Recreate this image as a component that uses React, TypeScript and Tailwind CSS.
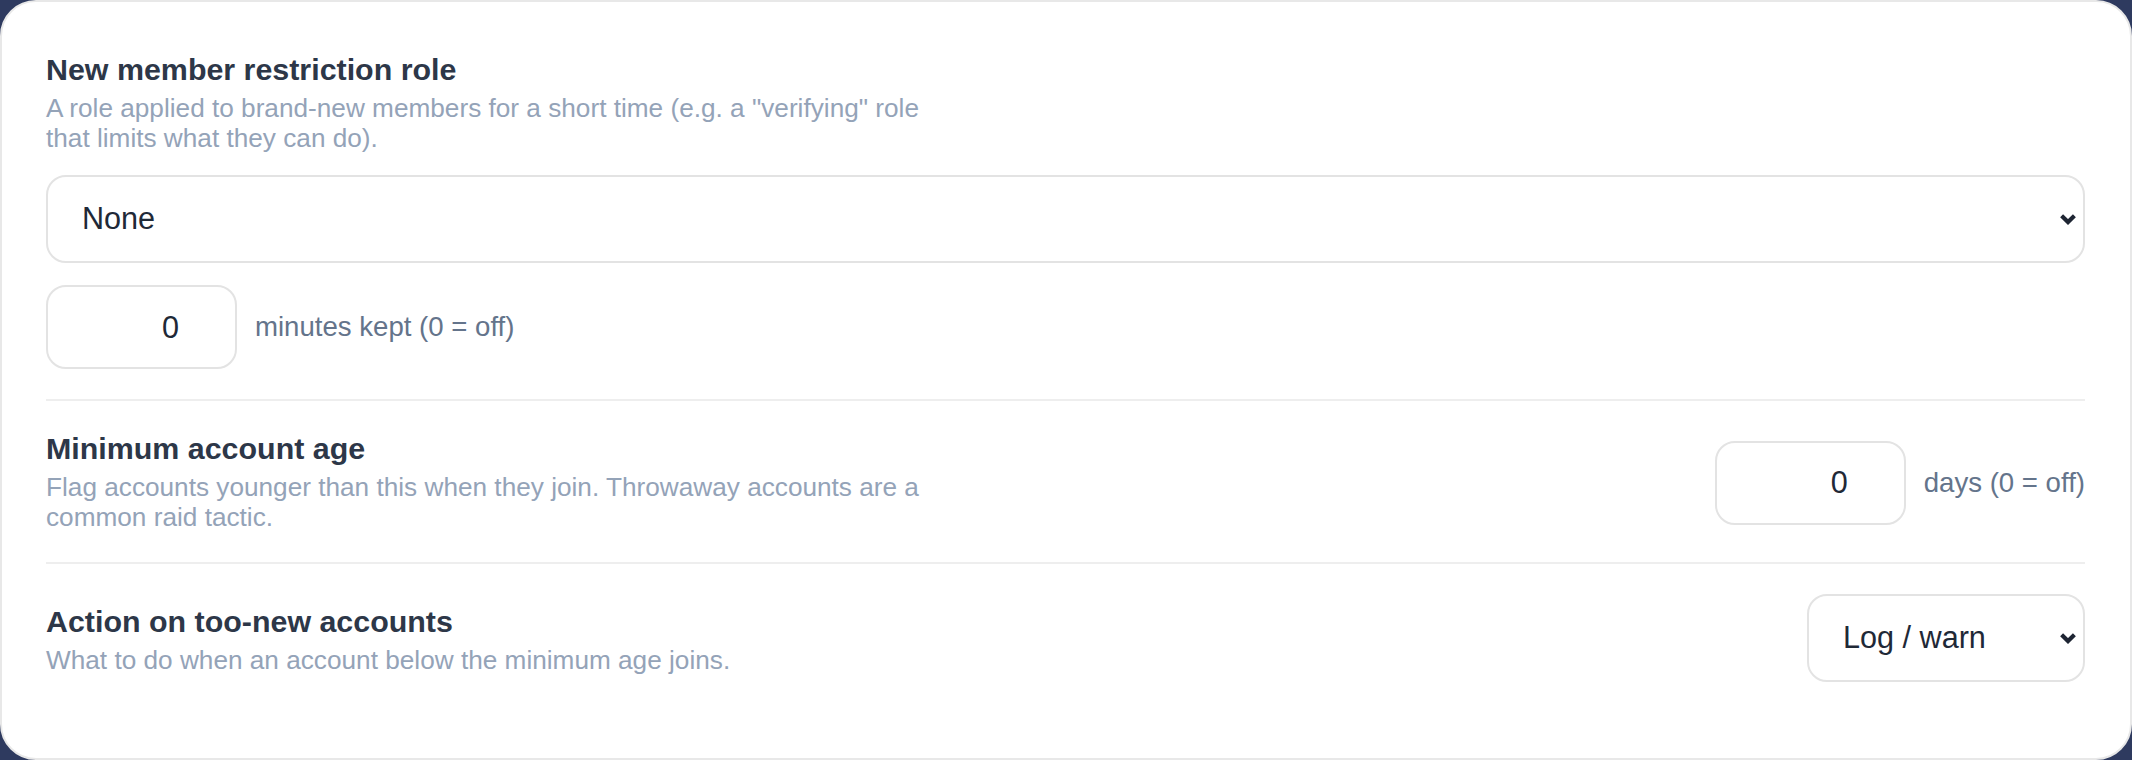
import React from "react";

const FONT = { fontFamily: '"Liberation Sans", Arial, sans-serif' };

function Chevron() {
  return (
    <svg
      className="pointer-events-none absolute right-[8px] top-1/2 -translate-y-1/2"
      width="18"
      height="12"
      viewBox="0 0 18 12"
      fill="none"
    >
      <path d="M2.6 2.8 L9 9 L15.4 2.8" stroke="#1e2533" strokeWidth="4.2" />
    </svg>
  );
}

function Select({ value, options, className }: { value: string; options: string[]; className: string }) {
  return (
    <div className={"relative " + className}>
      <select
        defaultValue={value}
        className="h-[88px] w-full appearance-none rounded-[20px] border-2 border-[#e3e3e3] bg-white pl-[34px] pr-[40px] text-[30.6px] text-[#1f2937] outline-none"
        style={FONT}
      >
        {options.map((o) => (
          <option key={o}>{o}</option>
        ))}
      </select>
      <Chevron />
    </div>
  );
}

function NumberField({ value, hint }: { value: string; hint: string }) {
  return (
    <div className="flex items-center gap-[18px]">
      <input
        type="text"
        inputMode="numeric"
        defaultValue={value}
        className="h-[84px] w-[191px] rounded-[20px] border-2 border-[#e3e3e3] bg-white pr-[56px] text-right text-[30.6px] text-[#1f2937] outline-none"
        style={FONT}
      />
      <span className="text-[27.6px] text-[#64748b]">{hint}</span>
    </div>
  );
}

function Label({ title, desc }: { title: string; desc: string }) {
  return (
    <div>
      <h3 className="text-[30.4px] font-bold leading-[38px] text-[#2d3748]">{title}</h3>
      <p className="mt-[5px] max-w-[896px] text-[26.2px] leading-[30px] text-[#94a3b8]">{desc}</p>
    </div>
  );
}

export default function App() {
  return (
    <div className="h-[760px] w-[2132px] bg-[#2e3a5f]" style={FONT}>
      <div className="flex h-full flex-col rounded-[36px] border-2 border-[#e8e8e8] bg-white pb-[45px] pl-[44px] pr-[45px] pt-[48px]">
        {/* Restriction role */}
        <section className="flex flex-col border-b-2 border-[#eeeeee] pb-[30px]">
          <Label
            title="New member restriction role"
            desc={'A role applied to brand-new members for a short time (e.g. a "verifying" role that limits what they can do).'}
          />
          <Select value="None" options={["None"]} className="mt-[22px] w-full" />
          <div className="mt-[22px]">
            <NumberField value="0" hint="minutes kept (0 = off)" />
          </div>
        </section>

        {/* Minimum account age */}
        <section className="flex items-center justify-between border-b-2 border-[#eeeeee] pb-[30px] pt-[28px]">
          <Label
            title="Minimum account age"
            desc="Flag accounts younger than this when they join. Throwaway accounts are a common raid tactic."
          />
          <div className="mt-[4px]">
            <NumberField value="0" hint="days (0 = off)" />
          </div>
        </section>

        {/* Action on too-new accounts */}
        <section className="flex items-center justify-between py-[30px]">
          <Label title="Action on too-new accounts" desc="What to do when an account below the minimum age joins." />
          <Select value="Log / warn" options={["Log / warn", "Kick", "Ban"]} className="w-[278px]" />
        </section>
      </div>
    </div>
  );
}
